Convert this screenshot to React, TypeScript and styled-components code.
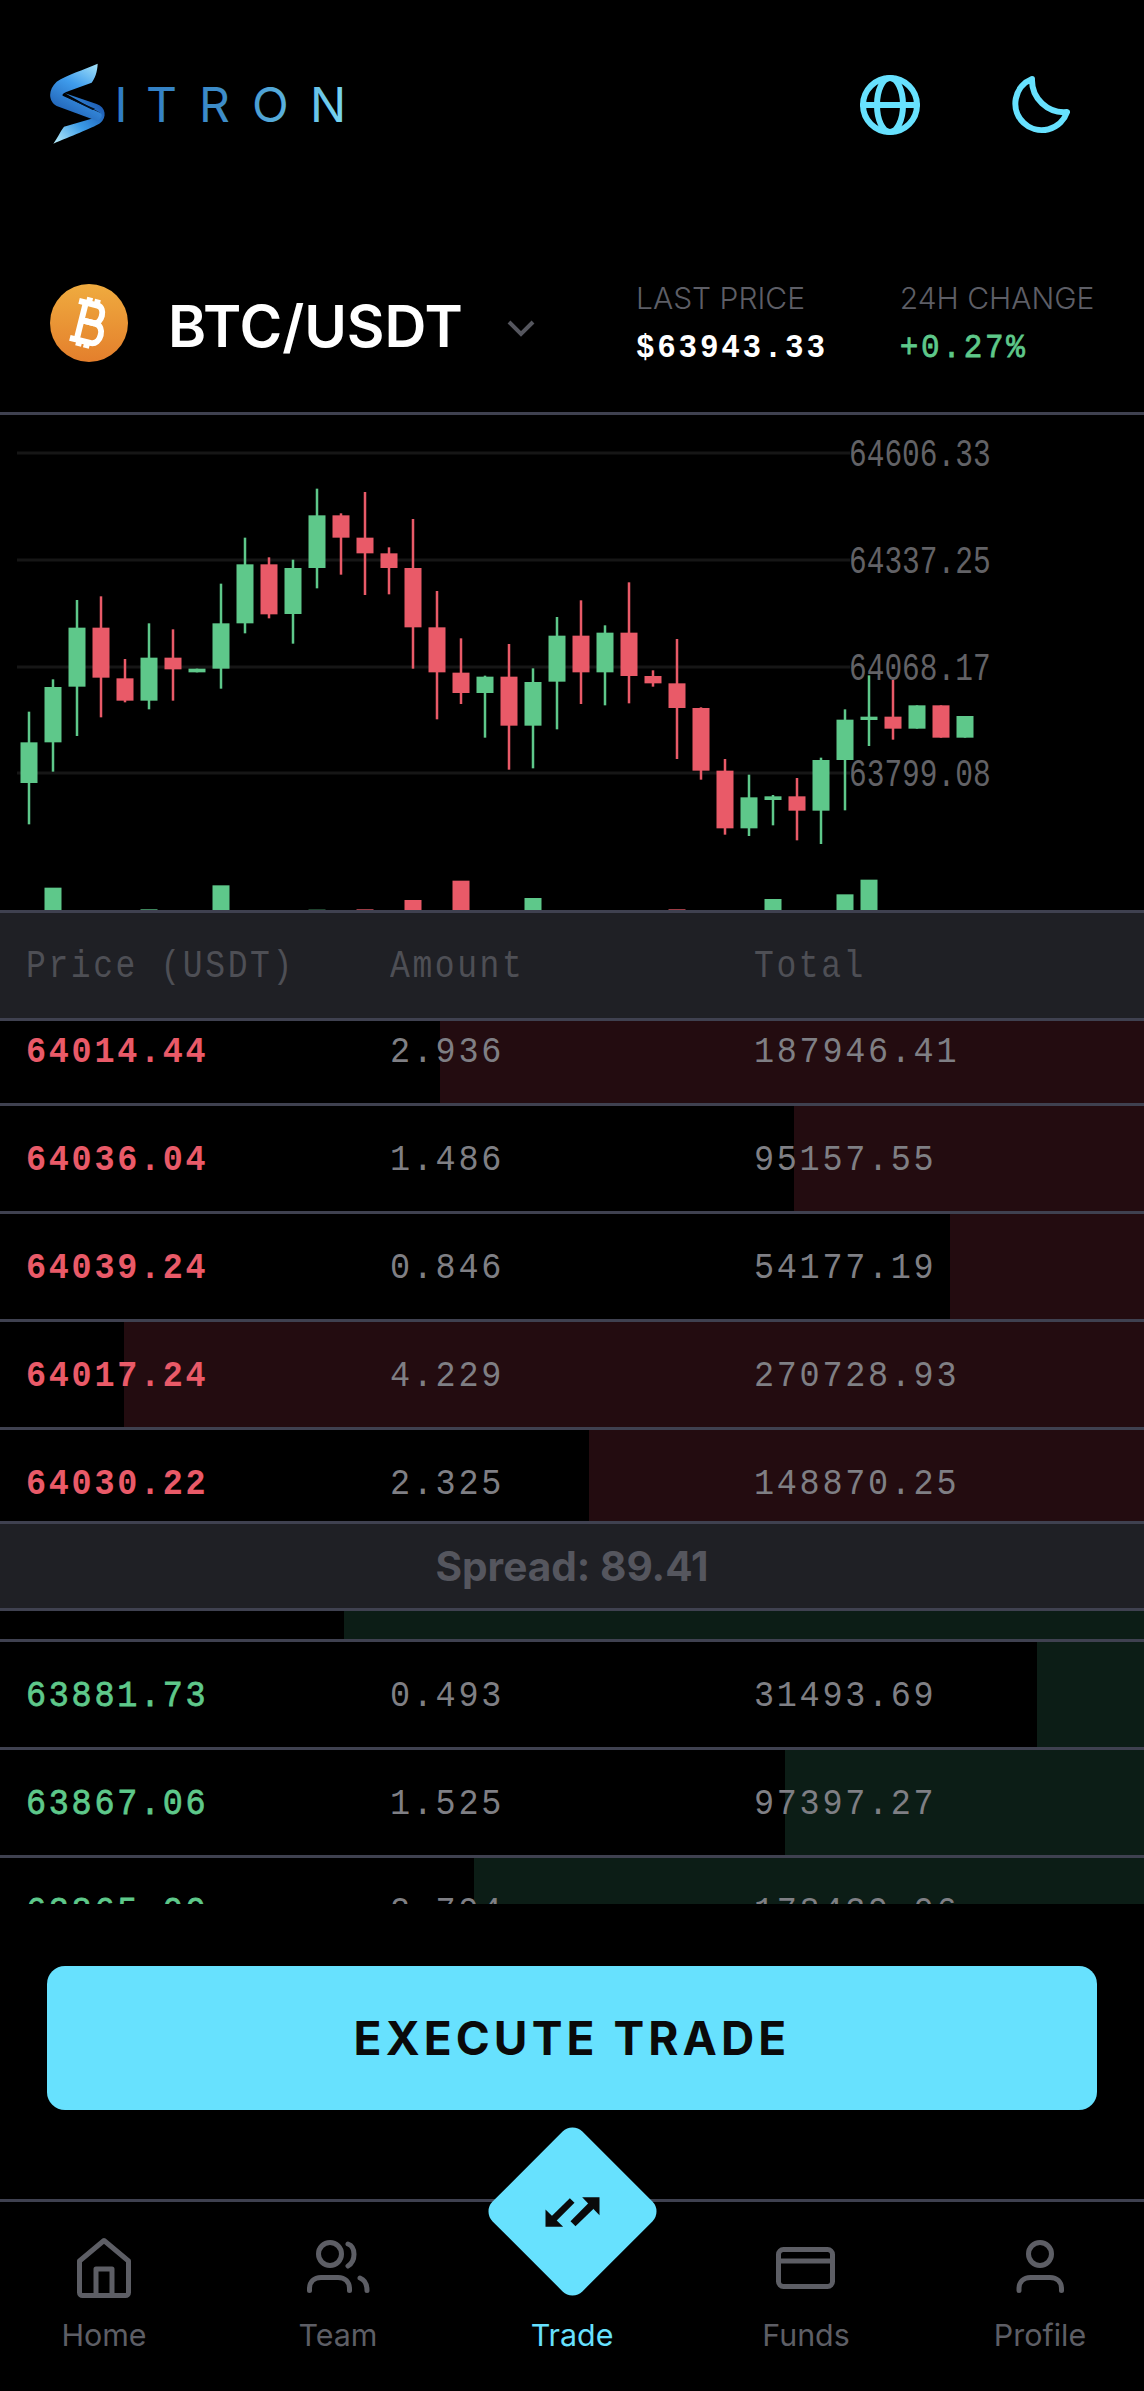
import React from "react";
import styled, { createGlobalStyle } from "styled-components";

const Global = createGlobalStyle`
  html, body { margin: 0; padding: 0; background: #000; }
  * { box-sizing: border-box; }
`;

const Page = styled.div`
  width: 1144px;
  height: 2391px;
  background: #000;
  display: flex;
  flex-direction: column;
  overflow: hidden;
  font-family: Inter, "Liberation Sans", sans-serif;
`;

const TopBar = styled.header`
  height: 200px;
  padding: 63px 73px 0 50px;
  display: flex;
  justify-content: space-between;
  align-items: flex-start;
  flex: none;
`;

const LogoMark = styled.svg`
  width: 345px;
  height: 84px;
  display: block;
`;

const TopIcons = styled.div`
  display: flex;
  gap: 88px;
  padding-top: 11px;
  color: #67e1fe;
`;

const TopIcon = styled.svg`
  width: 62px;
  height: 62px;
  display: block;
  fill: none;
  stroke: currentColor;
  stroke-width: 6;
  stroke-linecap: round;
  stroke-linejoin: round;
`;

const PairBar = styled.section`
  height: 215px;
  flex: none;
  padding: 0 0 0 50px;
  display: flex;
  align-items: flex-start;
  border-bottom: 3px solid #3f4150;
`;

const CoinBadge = styled.div`
  width: 78px;
  height: 78px;
  margin-top: 84px;
  border-radius: 50%;
  background: linear-gradient(180deg, #efab3f, #e47f2c);
  display: flex;
  align-items: center;
  justify-content: center;
  flex: none;
`;

const CoinGlyph = styled.svg`
  width: 40px;
  height: 54px;
  display: block;
  transform: rotate(14deg);
  fill: none;
  stroke: #fff;
  stroke-width: 6;
`;

const PairName = styled.div`
  margin: 87px 0 0 40px;
  width: 292px;
  height: 78px;
  line-height: 78px;
  font-size: 58px;
  font-weight: 600;
  color: #fff;
  white-space: nowrap;
  flex: none;
`;

const Chevron = styled.svg`
  width: 30px;
  height: 18px;
  margin: 119px 0 0 46px;
  flex: none;
  fill: none;
  stroke: #55565e;
  stroke-width: 4;
`;

const StatColumn = styled.div<{ $left: number }>`
  margin: 80px 0 0 ${(p) => p.$left}px;
  flex: none;
`;

const StatLabel = styled.div`
  font-size: 30px;
  line-height: 36px;
  font-weight: 300;
  color: #5d5e66;
  white-space: nowrap;
`;

const StatValue = styled.div<{ $color: string; $heavy: boolean }>`
  margin-top: 14px;
  font-family: "Liberation Mono", monospace;
  font-size: 31px;
  line-height: 36px;
  letter-spacing: 2.7px;
  font-weight: ${(p) => (p.$heavy ? 700 : 400)};
  -webkit-text-stroke: ${(p) => (p.$heavy ? 0 : "0.7px")};
  color: ${(p) => p.$color};
  white-space: nowrap;
  transform: scaleY(1.1);
`;

const ChartArea = styled.div`
  height: 495px;
  flex: none;
  overflow: hidden;
`;

const ChartSvg = styled.svg`
  width: 1144px;
  height: 495px;
  display: block;
`;

const HeadRow = styled.div`
  height: 111px;
  flex: none;
  display: grid;
  grid-template-columns: repeat(3, 1fr);
  align-items: center;
  padding: 4px 26px 0;
  background: #1f2025;
  border-top: 3px solid #3f4150;
  border-bottom: 3px solid #3f4150;
  font-family: "Liberation Mono", monospace;
  font-size: 33px;
  letter-spacing: 2.6px;
  color: #4e4f55;
  white-space: nowrap;
`;

const HeadCell = styled.span`
  transform: scaleY(1.15);
`;

const Clip = styled.div<{ $h: number }>`
  height: ${(p) => p.$h}px;
  flex: none;
  overflow: hidden;
`;

const List = styled.div<{ $shift: number }>`
  margin-top: ${(p) => p.$shift}px;
`;

const Row = styled.div`
  position: relative;
  height: 108px;
  display: grid;
  grid-template-columns: repeat(3, 1fr);
  align-items: center;
  padding: 2px 26px 0;
  border-bottom: 3px solid #3f4150;
  font-family: "Liberation Mono", monospace;
  font-size: 33.5px;
  line-height: 40px;
  letter-spacing: 2.7px;
  white-space: nowrap;
`;

const Fill = styled.div<{ $start: number; $bg: string }>`
  position: absolute;
  top: 0;
  bottom: 0;
  right: 0;
  left: ${(p) => p.$start}px;
  background: ${(p) => p.$bg};
`;

const Price = styled.span<{ $color: string; $bold: boolean }>`
  position: relative;
  color: ${(p) => p.$color};
  font-weight: ${(p) => (p.$bold ? 700 : 400)};
  -webkit-text-stroke: ${(p) => (p.$bold ? 0 : "0.7px")};
  transform: scaleY(1.12);
`;

const Cell = styled.span`
  position: relative;
  color: #7f7f84;
  transform: scaleY(1.12);
`;

const SpreadRow = styled.div`
  height: 90px;
  flex: none;
  display: flex;
  align-items: center;
  justify-content: center;
  background: #1f2025;
  border-top: 3px solid #3f4150;
  border-bottom: 3px solid #3f4150;
  color: #55565e;
  font-size: 40.6px;
  font-weight: 700;
`;

const ActionZone = styled.div`
  height: 295px;
  flex: none;
  padding: 62px 47px 0;
`;

const ExecuteButton = styled.button`
  width: 1050px;
  height: 144px;
  border: none;
  border-radius: 18px;
  background: #67e1fe;
  color: #0a0a0a;
  font-family: Inter, "Liberation Sans", sans-serif;
  font-size: 46px;
  font-weight: 700;
  letter-spacing: 4.1px;
`;

const NavBar = styled.nav`
  position: relative;
  flex: 1;
  border-top: 3px solid #3f4150;
  display: grid;
  grid-template-columns: repeat(5, 234px);
  justify-content: center;
`;

const NavItem = styled.div<{ $active?: boolean }>`
  display: flex;
  flex-direction: column;
  align-items: center;
  padding-top: 33px;
  color: ${(p) => (p.$active ? "#67e1fe" : "#5d5e65")};
`;

const NavIcon = styled.svg`
  width: 70px;
  height: 70px;
  display: block;
  fill: none;
  stroke: currentColor;
  stroke-width: 5;
  stroke-linecap: round;
  stroke-linejoin: round;
`;

const NavSpacer = styled.div`
  height: 70px;
`;

const NavLabel = styled.div`
  margin-top: 10px;
  font-size: 30.4px;
  line-height: 40px;
  font-weight: 400;
`;

const Diamond = styled.div`
  position: absolute;
  left: 508.5px;
  top: -54.5px;
  width: 127px;
  height: 127px;
  border-radius: 14px;
  background: #67e1fe;
  transform: rotate(45deg);
  display: flex;
  align-items: center;
  justify-content: center;
`;

const DiamondIcon = styled.svg`
  width: 64px;
  height: 64px;
  display: block;
  flex: none;
  transform: rotate(-45deg);
  fill: #0a0a0a;
`;

const raw: [number, number, number, number, number][] = [
  [1, 725, 1063, 817, 939],
  [1, 628, 905, 651, 817],
  [1, 390, 798, 473, 650],
  [0, 379, 742, 473, 623],
  [0, 567, 697, 625, 692],
  [1, 460, 718, 563, 692],
  [0, 478, 692, 563, 598],
  [1, 596, 607, 596, 607],
  [1, 341, 656, 460, 596],
  [1, 203, 490, 283, 460],
  [0, 262, 445, 283, 433],
  [1, 269, 521, 294, 432],
  [1, 56, 355, 136, 294],
  [0, 130, 314, 136, 203],
  [0, 66, 375, 203, 250],
  [0, 232, 373, 250, 294],
  [0, 147, 596, 294, 472],
  [0, 363, 748, 472, 607],
  [0, 505, 702, 608, 669],
  [1, 617, 803, 620, 669],
  [0, 522, 899, 620, 767],
  [1, 595, 895, 636, 767],
  [1, 441, 778, 497, 635],
  [0, 391, 702, 497, 607],
  [1, 466, 706, 488, 607],
  [0, 337, 700, 488, 618],
  [0, 601, 650, 618, 640],
  [0, 507, 867, 640, 714],
  [0, 712, 929, 714, 902],
  [0, 867, 1094, 902, 1075],
  [1, 914, 1098, 982, 1075],
  [1, 975, 1066, 979, 990],
  [0, 924, 1111, 979, 1022],
  [1, 863, 1122, 870, 1022],
  [1, 718, 1021, 749, 870],
  [1, 616, 828, 740, 750],
  [0, 630, 809, 740, 776],
  [1, 706, 776, 706, 776],
  [0, 706, 803, 706, 803],
  [1, 738, 803, 738, 803],
];
const volumes: Record<number, number> = { 1: 1253, 5: 1318, 8: 1246, 12: 1319, 14: 1318, 16: 1290, 18: 1232, 21: 1284, 27: 1318, 31: 1287, 34: 1273, 35: 1229 };

const GREEN = "#5ec88a";
const RED = "#e95a68";
const CHART_TOP = 415;
const zy = (v: number) => 470 + v / 3 - CHART_TOP;

const Logo = () => (
  <LogoMark viewBox="50 63 345 84">
    <defs>
      <linearGradient id="ribA" gradientUnits="userSpaceOnUse" x1="293" y1="101" x2="200" y2="270">
        <stop offset="0" stopColor="#a5e4fa" />
        <stop offset="0.45" stopColor="#3f9cec" />
        <stop offset="1" stopColor="#1d5cb0" />
      </linearGradient>
      <linearGradient id="ribB" gradientUnits="userSpaceOnUse" x1="300" y1="215" x2="165" y2="340">
        <stop offset="0" stopColor="#1c58b0" />
        <stop offset="0.5" stopColor="#3a9ae6" />
        <stop offset="1" stopColor="#b6ecfb" />
      </linearGradient>
      <linearGradient id="word" gradientUnits="userSpaceOnUse" x1="120" y1="87" x2="345" y2="122">
        <stop offset="0" stopColor="#2f7cc4" />
        <stop offset="0.5" stopColor="#3f8fca" />
        <stop offset="1" stopColor="#79d8f4" />
      </linearGradient>
    </defs>
    <g transform="translate(0 30) scale(0.33333)">
      <path fill="url(#ribB)" d="M195 190L290 222C318 232 322 262 300 280C275 295 210 320 160 341C172 325 180 305 192 290L290 262C305 255 305 250 295 245Z" />
      <path fill="url(#ribA)" d="M293 101C292 125 285 145 275 158L215 180C195 187 185 192 188 197L300 248C312 255 300 272 290 272L170 228C145 215 143 180 170 155C200 135 250 120 293 101Z" />
      <path fill="#04101f" d="M190 196L285 236L278 240Z" />
    </g>
    <text fill="url(#word)" fontFamily="Inter, sans-serif" fontWeight="400" fontSize="48" y="122" x="114.500 146 199 252 310">ITRON</text>
  </LogoMark>
);

type RowData = { p: string; a: string; t: string; start: number };
const asks: RowData[] = [
  { p: "64014.44", a: "2.936", t: "187946.41", start: 440 },
  { p: "64036.04", a: "1.486", t: "95157.55", start: 794 },
  { p: "64039.24", a: "0.846", t: "54177.19", start: 950 },
  { p: "64017.24", a: "4.229", t: "270728.93", start: 124 },
  { p: "64030.22", a: "2.325", t: "148870.25", start: 589 },
];
const bids: RowData[] = [
  { p: "", a: "", t: "", start: 344 },
  { p: "63881.73", a: "0.493", t: "31493.69", start: 1037 },
  { p: "63867.06", a: "1.525", t: "97397.27", start: 785 },
  { p: "63865.00", a: "2.794", t: "178439.06", start: 474 },
];

const Rows = ({ data, color, bg, bold }: { data: RowData[]; color: string; bg: string; bold: boolean }) => (
  <>
    {data.map((r) => (
      <Row key={r.start}>
        <Fill $start={r.start} $bg={bg} />
        <Price $color={color} $bold={bold}>{r.p}</Price>
        <Cell>{r.a}</Cell>
        <Cell>{r.t}</Cell>
      </Row>
    ))}
  </>
);

const axis: [string, number][] = [["64606.33", 453], ["64337.25", 560], ["64068.17", 667], ["63799.08", 773]];

export default function App() {
  return (
    <Page>
      <Global />
      <TopBar>
        <Logo />
        <TopIcons>
          <TopIcon viewBox="0 0 62 62">
            <circle cx="31" cy="31" r="27" />
            <ellipse cx="31" cy="31" rx="13" ry="27" />
            <path d="M4 31h54" />
          </TopIcon>
          <TopIcon viewBox="0 0 62 62">
            <path d="M23 5A26.500 26.500 0 1 0 58 38A32 32 0 0 1 23 5Z" />
          </TopIcon>
        </TopIcons>
      </TopBar>
      <PairBar>
        <CoinBadge>
          <CoinGlyph viewBox="0 0 40 54">
            <path d="M12 8V46" />
            <path d="M5 8H24C33 8 33 26 24 26H12" />
            <path d="M12 26H26C37 26 37 46 26 46H5" />
            <path d="M15 2V8M23 2V8M15 46V52M23 46V52" />
          </CoinGlyph>
        </CoinBadge>
        <PairName>BTC/USDT</PairName>
        <Chevron viewBox="0 0 30 18"><path d="M3 3l12 12L27 3" /></Chevron>
        <StatColumn $left={100}>
          <StatLabel>LAST PRICE</StatLabel>
          <StatValue $color="#fff" $heavy>$63943.33</StatValue>
        </StatColumn>
        <StatColumn $left={72}>
          <StatLabel>24H CHANGE</StatLabel>
          <StatValue $color={GREEN} $heavy={false}>+0.27%</StatValue>
        </StatColumn>
      </PairBar>
      <ChartArea>
        <ChartSvg viewBox="0 0 1144 495">
          {axis.map(([l, y]) => (
            <g key={l}>
              <line x1="17" x2="850" y1={y - CHART_TOP} y2={y - CHART_TOP} stroke="#161616" strokeWidth="3" />
              <text
                transform={`translate(849 ${y - CHART_TOP + 13}) scale(1 1.3)`}
                fontFamily="Liberation Mono, monospace"
                fontSize="29.500"
                fill="#626266"
              >{l}</text>
            </g>
          ))}
          {raw.map(([g, w1, w2, b1, b2], i) => {
            const x = 29 + i * 24;
            const col = g ? GREEN : RED;
            return (
              <g key={i} fill={col}>
                <rect x={x - 1.25} width="2.5" y={zy(w1)} height={zy(w2) - zy(w1)} />
                <rect x={x - 8.5} width="17" y={zy(b1)} height={zy(b2) - zy(b1)} />
              </g>
            );
          })}
          {Object.entries(volumes).map(([k, v]) => {
            const i = Number(k);
            const x = 29 + i * 24;
            return <rect key={k} x={x - 8.5} width="17" y={zy(v)} height={495 - zy(v)} fill={raw[i][0] ? GREEN : RED} />;
          })}
        </ChartSvg>
      </ChartArea>
      <HeadRow>
        <HeadCell>Price (USDT)</HeadCell>
        <HeadCell>Amount</HeadCell>
        <HeadCell>Total</HeadCell>
      </HeadRow>
      <Clip $h={500}>
        <List $shift={-23}>
          <Rows data={asks} color={RED} bg="#230c10" bold />
        </List>
      </Clip>
      <SpreadRow>Spread: 89.41</SpreadRow>
      <Clip $h={293}>
        <List $shift={-77}>
          <Rows data={bids} color={GREEN} bg="#0c1d16" bold={false} />
        </List>
      </Clip>
      <ActionZone>
        <ExecuteButton>EXECUTE TRADE</ExecuteButton>
      </ActionZone>
      <NavBar>
        <NavItem>
          <NavIcon viewBox="0 0 70 70">
            <path d="M35 5.500L59.500 26V57.500a3 3 0 0 1-3 3H13.500a3 3 0 0 1-3-3V26Z" />
            <path d="M27 60.500V34H43V60.500" />
          </NavIcon>
          <NavLabel>Home</NavLabel>
        </NavItem>
        <NavItem>
          <NavIcon viewBox="0 0 70 70">
            <circle cx="27" cy="19" r="11.500" />
            <path d="M45 9C53 12 53 26 45 31" />
            <path d="M6.500 55.500V54C6.500 47 11 42.500 18 42.500H35C42 42.500 46.500 47 46.500 54V55.500" />
            <path d="M57 43C62 45 64 50 64 55.500" />
          </NavIcon>
          <NavLabel>Team</NavLabel>
        </NavItem>
        <NavItem $active>
          <NavSpacer />
          <NavLabel>Trade</NavLabel>
        </NavItem>
        <NavItem>
          <NavIcon viewBox="0 0 70 70">
            <rect x="7.500" y="14.500" width="54" height="37" rx="5" />
            <path d="M7.500 26H61.500" />
          </NavIcon>
          <NavLabel>Funds</NavLabel>
        </NavItem>
        <NavItem>
          <NavIcon viewBox="0 0 70 70">
            <circle cx="35" cy="19" r="11.500" />
            <path d="M14 55.500V54C14 47 18.500 42.500 25.500 42.500H45C52 42.500 56.500 47 56.500 54V55.500" />
          </NavIcon>
          <NavLabel>Profile</NavLabel>
        </NavItem>
        <Diamond>
          <DiamondIcon viewBox="180 177 192 192">
            <polygon points="195,265 195,317 248,317" />
            <polygon points="268,231 282,245 225,302 210,288" />
            <polygon points="305,228 357,228 357,282" />
            <polygon points="270,300 285,315 340,262 325,245" />
          </DiamondIcon>
        </Diamond>
      </NavBar>
    </Page>
  );
}
